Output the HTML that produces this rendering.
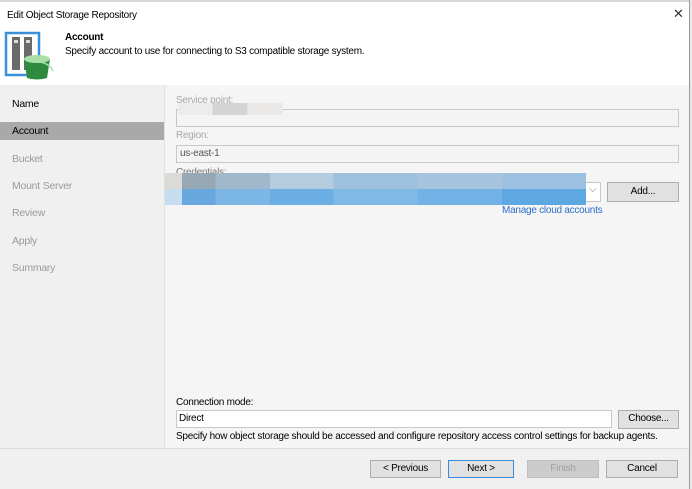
<!DOCTYPE html>
<html><head><meta charset="utf-8"><style>
*{margin:0;padding:0;box-sizing:border-box}
body{width:692px;height:489px;background:#fff;font-family:"Liberation Sans",sans-serif;font-size:10px;letter-spacing:-0.25px;color:#000;position:relative;overflow:hidden}
.a{position:absolute;white-space:nowrap}
.box{position:absolute;border:1px solid #c8c8c8;background:#f4f4f4}
.btn{position:absolute;border:1px solid #adadad;background:#e1e1e1;text-align:center;line-height:16px;font-size:10px}
.nav{position:absolute;left:12px;color:#9a9a9a;font-size:10.5px}
.lbl{position:absolute;color:#a8a8a8;font-size:10px}
</style></head><body>
<div class="a" style="left:0;top:0;width:692px;height:2px;background:#d8d8d8"></div>
<div class="a" style="left:689px;top:0;width:3px;height:489px;background:#e8e8e8;border-left:1px solid #9a9a9a"></div>
<div class="a" style="left:7px;top:10px">Edit Object Storage Repository</div>
<div class="a" style="left:673px;top:6px;font-size:13px;color:#333">✕</div>
<svg class="a" style="left:4px;top:31px" width="50" height="50" viewBox="0 0 50 50">
<rect x="2" y="2" width="33" height="42" fill="#fff" stroke="#3a8fd6" stroke-width="2.5"/>
<rect x="8" y="6" width="8" height="33" fill="#6a6a6a"/><rect x="20" y="6" width="8" height="33" fill="#6a6a6a"/>
<rect x="10" y="9" width="4" height="3" fill="#ddd"/><rect x="22" y="9" width="4" height="3" fill="#ddd"/>
<path d="M20 28 L46 28 L43 47 Q33 50 23 47 Z" fill="#2e8b3e"/>
<ellipse cx="33" cy="28" rx="13" ry="4" fill="#a8e0a8"/>
<path d="M36 31 Q46 33 49 40" stroke="#a8e0a8" stroke-width="1.5" fill="none"/>
</svg>
<div class="a" style="left:65px;top:32px;font-weight:bold">Account</div>
<div class="a" style="left:65px;top:46px">Specify account to use for connecting to S3 compatible storage system.</div>
<div class="a" style="left:0;top:85px;width:164px;height:363px;background:#f0f0f0"></div>
<div class="a" style="left:164px;top:85px;width:525px;height:363px;background:#f5f5f5;border-left:1px solid #e0e0e0"></div>
<div class="a" style="left:0;top:448px;width:689px;height:41px;background:#f0f0f0;border-top:1px solid #dcdcdc"></div>
<div class="a" style="left:0;top:122px;width:164px;height:18px;background:#a9a9a9"></div>
<div class="nav" style="top:98px;color:#000">Name</div>
<div class="nav" style="top:125px;color:#000">Account</div>
<div class="nav" style="top:153px">Bucket</div>
<div class="nav" style="top:180px">Mount Server</div>
<div class="nav" style="top:207px">Review</div>
<div class="nav" style="top:235px">Apply</div>
<div class="nav" style="top:262px">Summary</div>
<div class="lbl" style="left:176px;top:95px">Service point:</div>
<div class="box" style="left:176px;top:109px;width:503px;height:18px"></div>
<div class="a" style="left:178px;top:103px;width:105px;height:12px;background:linear-gradient(90deg,#ececec 0 33%,#d4d4d4 33% 66%,#ebe8e8 66%)"></div>
<div class="lbl" style="left:176px;top:130px">Region:</div>
<div class="box" style="left:176px;top:145px;width:503px;height:18px;color:#555;padding-left:3px;line-height:15px">us-east-1</div>
<div class="lbl" style="left:176px;top:167px;color:#777">Credentials:</div>
<div class="box" style="left:176px;top:182px;width:425px;height:20px;background:#fff"></div>
<div class="a" style="left:589px;top:184px;color:#777;font-size:10px">⌵</div>
<div class="a" style="left:165px;top:173px;width:421px;height:16px;background:linear-gradient(90deg,#dcdad6 0 4%,#95a8b4 4% 12%,#9fb8cc 12% 25%,#b4cce0 25% 40%,#9cc0de 40% 60%,#a6c4de 60% 80%,#9cc0e0 80%)"></div>
<div class="a" style="left:165px;top:189px;width:421px;height:16px;background:linear-gradient(90deg,#c6dcef 0 4%,#69a8de 4% 12%,#7cb6e6 12% 25%,#6aaee4 25% 40%,#80b8e6 40% 60%,#72b2e6 60% 80%,#5ea8e2 80%)"></div>
<div class="btn" style="left:607px;top:182px;width:72px;height:20px;line-height:18px">Add...</div>
<div class="a" style="left:502px;top:205px;color:#2a6fc9">Manage cloud accounts</div>
<div class="a" style="left:176px;top:397px">Connection mode:</div>
<div class="box" style="left:176px;top:410px;width:436px;height:18px;background:#fff;padding-left:2px;line-height:15px">Direct</div>
<div class="btn" style="left:618px;top:410px;width:61px;height:19px">Choose...</div>
<div class="a" style="left:176px;top:431px">Specify how object storage should be accessed and configure repository access control settings for backup agents.</div>
<div class="btn" style="left:370px;top:460px;width:71px;height:18px">&lt; Previous</div>
<div class="btn" style="left:448px;top:460px;width:66px;height:18px;border:1px solid #3c8ad8">Next &gt;</div>
<div class="btn" style="left:527px;top:460px;width:72px;height:18px;background:#cccccc;border-color:#bfbfbf;color:#a0a0a0">Finish</div>
<div class="btn" style="left:606px;top:460px;width:72px;height:18px">Cancel</div>
</body></html>
